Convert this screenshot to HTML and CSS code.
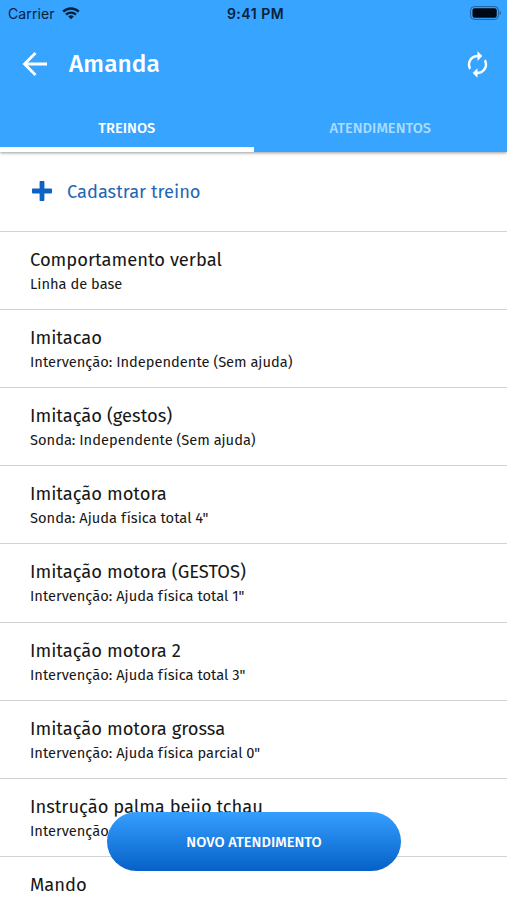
FILE: index.html
```html
<!DOCTYPE html>
<html lang="pt-BR">
<head>
<meta charset="utf-8">
<title>Amanda</title>
<link rel="stylesheet" href="styles.css">
</head>
<body>
<div class="screen">
  <header class="header">
    <div class="status">
      <div class="carrier"><span>Carrier</span>
        <svg width="18" height="13" viewBox="0 0 18 13" fill="none" stroke="#08213b" stroke-width="2.4"><path d="M1.2 4.7a11.2 11.2 0 0 1 15.6 0M4 7.6a7.2 7.2 0 0 1 10 0"/><path d="M9 12.2 6.2 9.5a4 4 0 0 1 5.6 0z" fill="#08213b" stroke="none"/></svg>
      </div>
      <div class="time">9:41 PM</div>
      <svg class="battery" width="32" height="14" viewBox="0 0 32 14"><rect x=".6" y=".6" width="27.8" height="12.8" rx="3.6" fill="none" stroke="#1d5f9e"/><rect x="2.500" y="2.300" width="24.200" height="9.400" rx="2" fill="#000814"/><path d="M29.700 4.800c1.700.7 1.700 3.700 0 4.400z" fill="#1d5f9e"/></svg>
    </div>
    <div class="toolbar">
      <svg class="back" width="26" height="26" viewBox="0 0 26 26" fill="none" stroke="#fff" stroke-width="2.8"><path d="M25 13H3M13.5 2 2.5 13l11 11"/></svg>
      <h1 class="heading">Amanda</h1>
      <svg class="sync" width="29" height="29" viewBox="0 0 24 24" fill="#fff"><path d="M12 6v3l4-4-4-4v3c-4.42 0-8 3.58-8 8 0 1.57.46 3.03 1.24 4.26L6.7 14.8A5.87 5.87 0 0 1 6 12c0-3.31 2.69-6 6-6zm6.76 1.74L17.3 9.2c.44.84.7 1.79.7 2.8 0 3.31-2.69 6-6 6v-3l-4 4 4 4v-3c4.42 0 8-3.58 8-8 0-1.57-.46-3.03-1.24-4.26z"/></svg>
    </div>
    <nav class="tabs">
      <div class="tab active">TREINOS</div>
      <div class="tab">ATENDIMENTOS</div>
    </nav>
  </header>
  <main class="list">
    <div class="row add">
      <svg width="20" height="20" viewBox="0 0 20 20" fill="#0b63c4"><path d="M8.400 0h3.200q.8 0 .8.8v6.800h6.800q.8 0 .8.8v3.200q0 .8-.8.8h-6.800v6.800q0 .8-.8.8H8.400q-.8 0-.8-.8v-6.800H.8q-.8 0-.8-.8V8.400q0-.8.8-.8h6.800V.8q0-.8.8-.8z"/></svg>
      <span class="add-label">Cadastrar treino</span>
    </div>
    <div class="row"><div class="title">Comportamento verbal</div><div class="sub">Linha de base</div></div>
    <div class="row"><div class="title">Imitacao</div><div class="sub">Intervenção: Independente (Sem ajuda)</div></div>
    <div class="row"><div class="title">Imitação (gestos)</div><div class="sub">Sonda: Independente (Sem ajuda)</div></div>
    <div class="row"><div class="title">Imitação motora</div><div class="sub">Sonda: Ajuda física total 4"</div></div>
    <div class="row"><div class="title">Imitação motora (GESTOS)</div><div class="sub">Intervenção: Ajuda física total 1"</div></div>
    <div class="row"><div class="title">Imitação motora 2</div><div class="sub">Intervenção: Ajuda física total 3"</div></div>
    <div class="row"><div class="title">Imitação motora grossa</div><div class="sub">Intervenção: Ajuda física parcial 0"</div></div>
    <div class="row"><div class="title">Instrução palma beijo tchau</div><div class="sub">Intervenção</div></div>
    <div class="row"><div class="title">Mando</div></div>
  </main>
  <button class="fab">NOVO ATENDIMENTO</button>
</div>
</body>
</html>
```
FILE: styles.css
```css
* { box-sizing: border-box; }
body { margin: 0; font-family: "Fira Sans", "Noto Sans", sans-serif; background: #fff; }
.screen { position: relative; height: 900px; overflow: hidden; display: flex; flex-direction: column; }
.header { height: 152px; flex: none; background: #37a4ff; box-shadow: 0 1px 3px rgba(0,0,0,.4); z-index: 1; display: flex; flex-direction: column; }
.status { height: 27px; display: grid; grid-template-columns: 1fr auto 1fr; align-items: center; padding: 0 5px 0 8px; font-family: Inter, sans-serif; color: #08213b; font-size: 14px; }
.carrier { display: flex; align-items: center; gap: 7px; letter-spacing: .1px; }
.time { font-weight: 600; letter-spacing: .5px; padding-left: 1px; }
.battery { justify-self: end; margin-top: -1px; }
.toolbar { height: 74px; display: flex; align-items: center; padding: 0 15px 0 22px; }
.heading { flex: 1; margin: 0 0 0 21px; color: #fff; font-size: 24.4px; line-height: 30px; font-weight: 500; letter-spacing: .1px; }
.tabs { flex: 1; display: flex; }
.tab { flex: 1; display: flex; align-items: center; justify-content: center; color: #a9dcff; font-size: 14.67px; font-weight: 500; border-bottom: 5px solid transparent; padding-top: 8px; }
.tab.active { color: #fff; border-bottom-color: #fff; }
.list { flex: none; }
.row { height: 78.2px; border-bottom: 1.5px solid #d2d3d5; padding: 15px 30px 0; color: #171717; }
.add { height: 79.7px; display: flex; align-items: center; gap: 15px; padding: 0 32px; color: #1f67b5; }
.title { font-size: 18.35px; line-height: 26px; }
.add-label { font-size: 18.25px; line-height: 26px; padding-top: 1px; }
.sub { font-size: 14.67px; line-height: 20px; margin-top: 1px; }
.fab { position: absolute; left: 107px; top: 812px; width: 294px; height: 59px; border: 0; border-radius: 30px; background: linear-gradient(#359fff, #0661c7); color: #fff; font: 500 14.67px "Fira Sans", "Noto Sans", sans-serif; padding: 0; z-index: 2; }
```
